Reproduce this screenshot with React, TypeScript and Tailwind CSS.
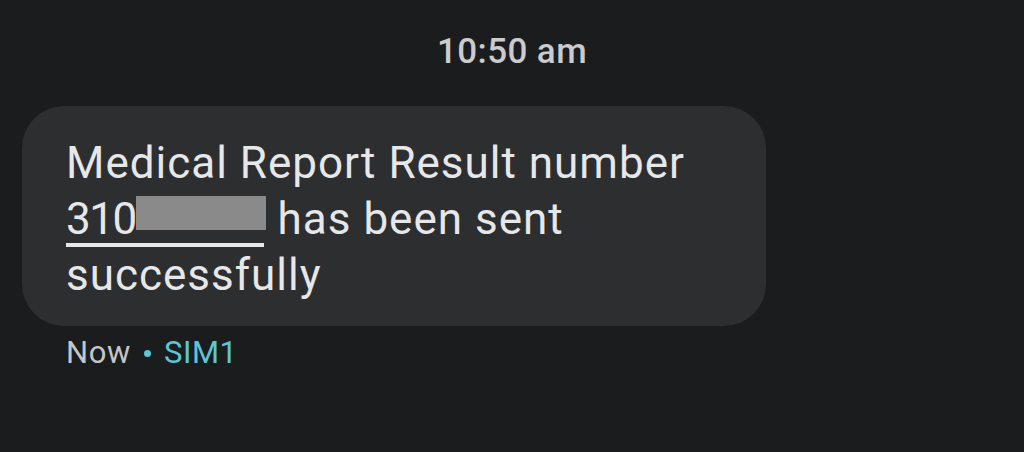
export default function App() {
  return (
    <div className="w-[1024px] h-[452px] bg-[#1b1c1e] overflow-hidden font-['Roboto',sans-serif]">
      <div className="pt-[32px] text-center text-[35px] leading-[40px] font-medium tracking-[0.4px] text-[#c9cbce]">
        10:50 am
      </div>
      <div className="mt-[34px] ml-[22px] w-[744px] h-[220px] rounded-[42px] bg-[#2d2e30] pl-[44px] pt-[29px]">
        <p className="text-[44px] leading-[56px] text-[#e6e7e9] tracking-[1px]">
          Medical Report Result number
          <br />
          <span className="relative inline-block tracking-[-1.5px]">
            310
            <span className="inline-block w-[130px] h-[34px] bg-[#8a8a8a] align-[4px]" />
            <span className="absolute left-0 right-[2px] bottom-0 h-[4px] bg-[#e6e7e9]" />
          </span>{' '}
          has been sent
          <br />
          successfully
        </p>
      </div>
      <div className="mt-[9px] ml-[66px] text-[31px] leading-[36px] tracking-[0.6px] flex items-center">
        <span className="text-[#c4c6c8]">Now</span>
        <span className="mx-[13px] w-[7px] h-[7px] rounded-full bg-[#5cc6d6]" />
        <span className="text-[#5cc6d6]">SIM1</span>
      </div>
    </div>
  );
}
